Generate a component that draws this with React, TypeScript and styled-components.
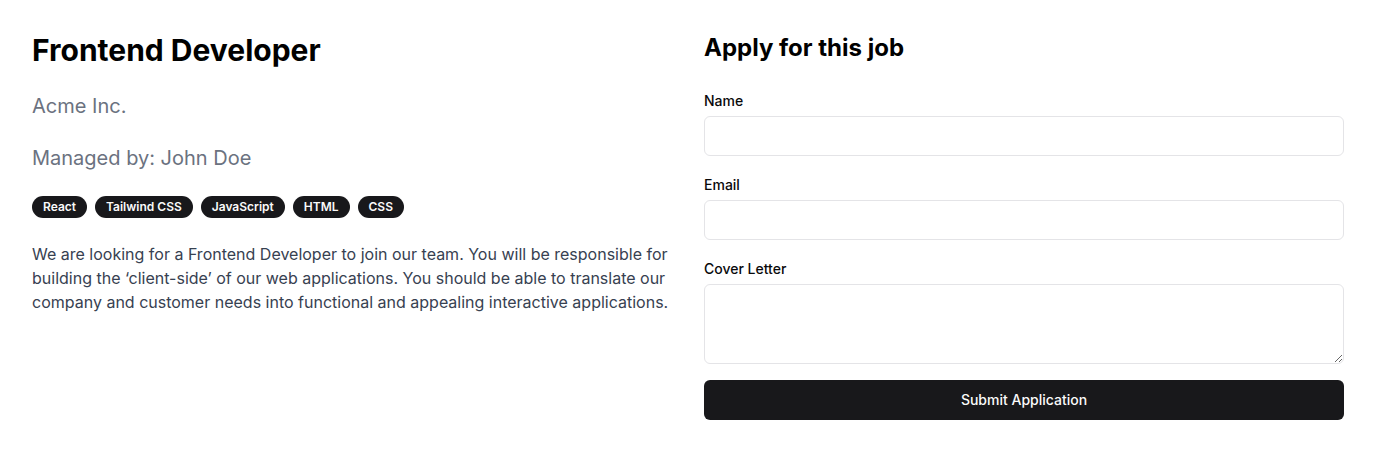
import React from "react";
import styled, { createGlobalStyle } from "styled-components";

const GlobalStyle = createGlobalStyle`
  *, *::before, *::after { box-sizing: border-box; }
  html, body { margin: 0; padding: 0; background: #ffffff; }
  body {
    font-family: Inter, "Noto Sans", "Liberation Sans", sans-serif;
    color: #09090b;
    -webkit-font-smoothing: antialiased;
  }
`;

const Page = styled.main`
  display: grid;
  grid-template-columns: 1fr 1fr;
  gap: 32px;
  padding: 32px;
`;

const Column = styled.section`
  display: flex;
  flex-direction: column;
  min-width: 0;
`;

const Title = styled.h1`
  margin: 0;
  font-size: 30px;
  line-height: 36px;
  font-weight: 700;
  color: #000000;
`;

const Meta = styled.p<{ $gap: number }>`
  margin: ${(p) => p.$gap}px 0 0;
  font-size: 20px;
  line-height: 28px;
  color: #6b7280;
`;

const Tags = styled.div`
  display: flex;
  flex-wrap: wrap;
  gap: 8px;
  margin-top: 24px;
`;

const Tag = styled.span`
  display: inline-flex;
  align-items: center;
  height: 22px;
  padding: 0 10px;
  border: 1px solid transparent;
  border-radius: 9999px;
  background: #18181b;
  color: #fafafa;
  font-size: 12px;
  line-height: 16px;
  font-weight: 600;
`;

const Description = styled.p`
  margin: 24px 0 0;
  font-size: 16px;
  line-height: 24px;
  color: #374151;
`;

const FormTitle = styled.h2`
  margin: 0 0 27px;
  font-size: 24px;
  line-height: 32px;
  font-weight: 700;
  color: #000000;
`;

const Form = styled.form`
  display: flex;
  flex-direction: column;
  gap: 19px;
`;

const Field = styled.div`
  display: flex;
  flex-direction: column;
  gap: 5px;
`;

const Label = styled.label`
  font-size: 14px;
  line-height: 20px;
  font-weight: 500;
  color: #09090b;
`;

const Input = styled.input`
  height: 40px;
  width: 100%;
  border: 1px solid #e4e4e7;
  border-radius: 6px;
  padding: 8px 12px;
  font: inherit;
  font-size: 14px;
  background: #ffffff;
  outline: none;
`;

const TextArea = styled.textarea`
  height: 80px;
  width: 100%;
  border: 1px solid #e4e4e7;
  border-radius: 6px;
  padding: 8px 12px;
  font: inherit;
  font-size: 14px;
  background: #ffffff;
  resize: vertical;
  outline: none;
  display: block;
`;

const Submit = styled.button`
  margin-top: -3px;
  height: 40px;
  width: 100%;
  border: none;
  border-radius: 6px;
  padding: 0 16px 2px;
  background: #18181b;
  color: #fafafa;
  font-family: inherit;
  font-size: 14px;
  font-weight: 500;
  cursor: pointer;
`;

const skills = ["React", "Tailwind CSS", "JavaScript", "HTML", "CSS"];

export default function App() {
  return (
    <>
      <GlobalStyle />
      <Page>
        <Column>
          <Title>Frontend Developer</Title>
          <Meta $gap={24}>Acme Inc.</Meta>
          <Meta $gap={24}>Managed by: John Doe</Meta>
          <Tags>
            {skills.map((s) => (
              <Tag key={s}>{s}</Tag>
            ))}
          </Tags>
          <Description>
            We are looking for a Frontend Developer to join our team. You will be responsible for
            building the ‘client-side’ of our web applications. You should be able to translate our
            company and customer needs into functional and appealing interactive applications.
          </Description>
        </Column>
        <Column>
          <FormTitle>Apply for this job</FormTitle>
          <Form onSubmit={(e) => e.preventDefault()}>
            <Field>
              <Label htmlFor="name">Name</Label>
              <Input id="name" type="text" />
            </Field>
            <Field>
              <Label htmlFor="email">Email</Label>
              <Input id="email" type="email" />
            </Field>
            <Field>
              <Label htmlFor="cover">Cover Letter</Label>
              <TextArea id="cover" />
            </Field>
            <Submit type="submit">Submit Application</Submit>
          </Form>
        </Column>
      </Page>
    </>
  );
}
